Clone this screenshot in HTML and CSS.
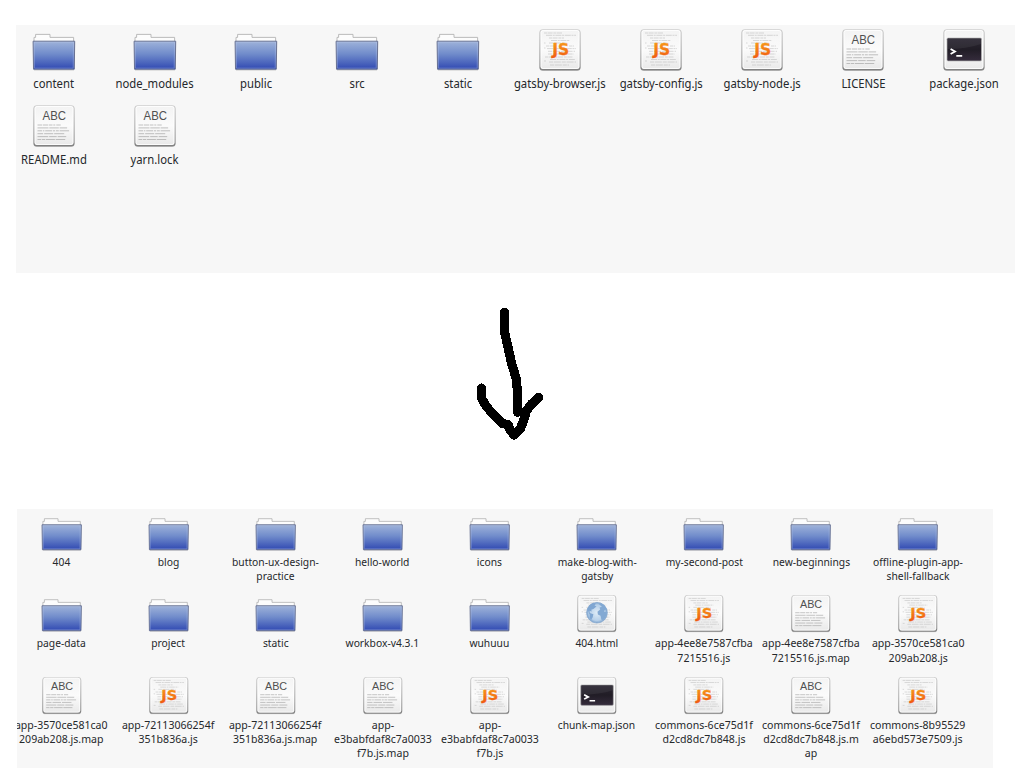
FILE: index.html
```html
<!DOCTYPE html>
<html lang="en">
<head>
<meta charset="utf-8">
<title>Gatsby build</title>
<link rel="stylesheet" href="styles.css">
</head>
<body>
<svg class="defs" width="0" height="0" aria-hidden="true">
  <defs>
    <linearGradient id="blue" x1="0" y1="0" x2="0" y2="1"><stop offset="0" stop-color="#9fb3da"/><stop offset=".45" stop-color="#718ccb"/><stop offset="1" stop-color="#3049b2"/></linearGradient>
    <linearGradient id="paper" x1="0" y1="0" x2="0" y2="1"><stop offset="0" stop-color="#f3f3f3"/><stop offset=".5" stop-color="#fbfbfb"/><stop offset="1" stop-color="#e9e9e9"/></linearGradient>
    <linearGradient id="edge" x1="0" y1="0" x2="0" y2="1"><stop offset="0" stop-color="#cfcfcf"/><stop offset="1" stop-color="#808080"/></linearGradient>
    <linearGradient id="orange" x1="0" y1="0" x2="0" y2="1"><stop offset="0" stop-color="#f7a01c"/><stop offset="1" stop-color="#f05a10"/></linearGradient>
    <linearGradient id="screen" x1="0" y1="0" x2="0" y2="1"><stop offset="0" stop-color="#2c2833"/><stop offset=".5" stop-color="#211d26"/><stop offset="1" stop-color="#352c3c"/></linearGradient>
    <radialGradient id="sea"><stop offset="0" stop-color="#dfecf7"/><stop offset=".75" stop-color="#b7d0e9"/><stop offset="1" stop-color="#7da3cd"/></radialGradient>
  </defs>
  <symbol id="folder" viewBox="0 0 44 44" preserveAspectRatio="none">
    <path d="M2 41.9H42" stroke="#000" stroke-opacity=".18" stroke-width="1.2"/>
    <path d="M2 14V9.4H3.6V6.4H18V9.4H41.6V14Z" fill="#fcfcfc" stroke="#b4b4b4" stroke-width=".9"/>
    <path d="M1.1 13.2H42.7L42.3 41.2H1.5Z" fill="url(#blue)" stroke="#687192" stroke-width="1"/>
    <path d="M2.2 14.2H41.5L41.2 40.1H2.5Z" fill="none" stroke="#c3d0ee" stroke-opacity=".38" stroke-width=".8"/>
  </symbol>
  <symbol id="sheet" viewBox="0 0 44 44" preserveAspectRatio="none">
    <rect x="1.3" y="2" width="41.4" height="41" rx="3.5" fill="#000" opacity=".12"/>
    <rect x="1.5" y="1.2" width="41" height="41.3" rx="3.3" fill="url(#edge)"/>
    <rect x="2.5" y="1.9" width="39" height="39.2" rx="2.5" fill="url(#paper)"/>
    <rect x="3.1" y="2.5" width="37.8" height="38" rx="2" fill="none" stroke="#fff" stroke-width=".8"/>
  </symbol>
  <symbol id="text" viewBox="0 0 44 44" preserveAspectRatio="none">
    <use href="#sheet" width="44" height="44"/>
    <text x="10.6" y="15.9" class="abc" textLength="23.4" lengthAdjust="spacingAndGlyphs">ABC</text>
    <g stroke="#a2a2a2" stroke-width="1" fill="none" opacity=".65">
      <path d="M5.5 21H37" stroke-dasharray="4.6 .7 5.2 .7 3.8 .8 2 1 4.4 20"/>
      <path d="M5.5 23.9H36" stroke-dasharray="11 .8 9.5 .8 7.5 20"/>
      <path d="M5.5 26.8H39" stroke-dasharray="4.5 .8 1.6 .8 7 .8 2 .8 3 .8 9.5 20"/>
      <path d="M5.5 29.7H36" stroke-dasharray="5.6 1.1 9 1 10 20"/>
      <path d="M5.5 32.6H37.5" stroke-dasharray="10.7 1 7.5 1 8.5 20"/>
      <path d="M5.5 35.5H34" stroke-dasharray="3.5 .7 3.5 .7 9 .8 9.5 20"/>
    </g>
  </symbol>
  <symbol id="code" viewBox="0 0 44 44" preserveAspectRatio="none">
    <use href="#sheet" width="44" height="44"/>
    <g stroke="#b4b4b4" stroke-width=".8" fill="none" opacity=".6">
      <path d="M6 5H24M11 10H26M8 18H18M31 18H36M7 29H35" stroke-dasharray="3 .6 5 .8"/>
      <path d="M8 7.3H38M13 12.5H32M9 20.6H38M12 31.5H37" stroke-dasharray="6 .7 2 .7"/>
      <path d="M11 15H29M10 23.3H37M10 26H36M11 34H38M12 37H31" stroke-dasharray="4 .8 7 1"/>
      <path d="M6 15H7.5M6 20H7.5M6 33H8"/>
    </g>
  </symbol>
  <symbol id="js" viewBox="0 0 44 44" preserveAspectRatio="none">
    <use href="#code" width="44" height="44"/>
    <text x="22.6" y="26.6" text-anchor="middle" class="js">JS</text>
  </symbol>
  <symbol id="terminal" viewBox="0 0 44 44" preserveAspectRatio="none">
    <use href="#sheet" width="44" height="44"/>
    <rect x="5" y="10" width="34.5" height="23" rx="1.2" fill="url(#screen)" stroke="#b5b5b5" stroke-width=".7"/>
    <path d="M5.5 21Q25 21 39 16V11H5.5Z" fill="#fff" opacity=".06"/>
    <path d="M8.6 21L13 23.5L8.6 26M14.3 27.8H20.2" fill="none" stroke="#fff" stroke-width="1.8"/>
  </symbol>
  <symbol id="html" viewBox="0 0 44 44" preserveAspectRatio="none">
    <use href="#code" width="44" height="44"/>
    <g transform="translate(2.2 .6) scale(.9 .95)">
      <circle cx="22.2" cy="21.5" r="12.2" fill="url(#sea)" stroke="#7fa5ce" stroke-width=".8"/>
      <path d="M11 17Q13 11.4 18 10L21 10.6L19.4 13L21.6 14.2L18 17.2L15.4 18L16.2 20L13.4 19.3L13.8 21.7L18 23.2L17.2 26.7L15.2 30.2Q13.2 28 13.5 23.6Z" fill="#7fa6d2"/>
      <path d="M24.4 11.2L27 10.2Q32.5 12.3 33.8 18.5L31.8 17.7L30.3 20L33.8 21Q33.6 26.4 29.6 30.1L27.4 29.7L26.4 25L23.3 23.6L22.8 20.2L26 17.6L25.2 15.3L28 14.3Z" fill="#83a9d3"/>
    </g>
  </symbol>
</svg>

<main class="page">
  <section class="panel source">
    <figure class="item"><svg><use href="#folder"/></svg><figcaption>content</figcaption></figure>
    <figure class="item"><svg><use href="#folder"/></svg><figcaption>node_modules</figcaption></figure>
    <figure class="item"><svg><use href="#folder"/></svg><figcaption>public</figcaption></figure>
    <figure class="item"><svg><use href="#folder"/></svg><figcaption>src</figcaption></figure>
    <figure class="item"><svg><use href="#folder"/></svg><figcaption>static</figcaption></figure>
    <figure class="item"><svg><use href="#js"/></svg><figcaption>gatsby-browser.js</figcaption></figure>
    <figure class="item"><svg><use href="#js"/></svg><figcaption>gatsby-config.js</figcaption></figure>
    <figure class="item"><svg><use href="#js"/></svg><figcaption>gatsby-node.js</figcaption></figure>
    <figure class="item"><svg><use href="#text"/></svg><figcaption>LICENSE</figcaption></figure>
    <figure class="item"><svg><use href="#terminal"/></svg><figcaption>package.json</figcaption></figure>
    <figure class="item"><svg><use href="#text"/></svg><figcaption>README.md</figcaption></figure>
    <figure class="item"><svg><use href="#text"/></svg><figcaption>yarn.lock</figcaption></figure>
  </section>

  <div class="arrow">
    <svg width="80" height="140" viewBox="470 305 80 140" fill="none" stroke="#000" stroke-width="9.2" stroke-linecap="round" stroke-linejoin="round" shape-rendering="crispEdges">
      <path d="M504.5 312.5V332L508 347L511.5 363L516 378L517.5 391V412.3"/>
      <path d="M481.5 388V397.5Q483 402 489 409.5L502.5 423.5L508 424.5L510 430L514 435L520 429.5L523.5 421L526.5 410.5L532 403.5L538.5 397.5"/>
    </svg>
  </div>

  <section class="panel build">
    <figure class="item"><svg><use href="#folder"/></svg><figcaption>404</figcaption></figure>
    <figure class="item"><svg><use href="#folder"/></svg><figcaption>blog</figcaption></figure>
    <figure class="item"><svg><use href="#folder"/></svg><figcaption>button-ux-design-<br>practice</figcaption></figure>
    <figure class="item"><svg><use href="#folder"/></svg><figcaption>hello-world</figcaption></figure>
    <figure class="item"><svg><use href="#folder"/></svg><figcaption>icons</figcaption></figure>
    <figure class="item"><svg><use href="#folder"/></svg><figcaption>make-blog-with-<br>gatsby</figcaption></figure>
    <figure class="item"><svg><use href="#folder"/></svg><figcaption>my-second-post</figcaption></figure>
    <figure class="item"><svg><use href="#folder"/></svg><figcaption>new-beginnings</figcaption></figure>
    <figure class="item"><svg><use href="#folder"/></svg><figcaption>offline-plugin-app-<br>shell-fallback</figcaption></figure>
    <figure class="item"><svg><use href="#folder"/></svg><figcaption>page-data</figcaption></figure>
    <figure class="item"><svg><use href="#folder"/></svg><figcaption>project</figcaption></figure>
    <figure class="item"><svg><use href="#folder"/></svg><figcaption>static</figcaption></figure>
    <figure class="item"><svg><use href="#folder"/></svg><figcaption>workbox-v4.3.1</figcaption></figure>
    <figure class="item"><svg><use href="#folder"/></svg><figcaption>wuhuuu</figcaption></figure>
    <figure class="item"><svg><use href="#html"/></svg><figcaption>404.html</figcaption></figure>
    <figure class="item hashed"><svg><use href="#js"/></svg><figcaption>app-4ee8e7587cfba<br>7215516.js</figcaption></figure>
    <figure class="item hashed"><svg><use href="#text"/></svg><figcaption>app-4ee8e7587cfba<br>7215516.js.map</figcaption></figure>
    <figure class="item hashed"><svg><use href="#js"/></svg><figcaption>app-3570ce581ca0<br>209ab208.js</figcaption></figure>
    <figure class="item hashed"><svg><use href="#text"/></svg><figcaption>app-3570ce581ca0<br>209ab208.js.map</figcaption></figure>
    <figure class="item hashed"><svg><use href="#js"/></svg><figcaption>app-72113066254f<br>351b836a.js</figcaption></figure>
    <figure class="item hashed"><svg><use href="#text"/></svg><figcaption>app-72113066254f<br>351b836a.js.map</figcaption></figure>
    <figure class="item hashed"><svg><use href="#text"/></svg><figcaption>app-<br>e3babfdaf8c7a0033<br>f7b.js.map</figcaption></figure>
    <figure class="item hashed"><svg><use href="#js"/></svg><figcaption>app-<br>e3babfdaf8c7a0033<br>f7b.js</figcaption></figure>
    <figure class="item"><svg><use href="#terminal"/></svg><figcaption>chunk-map.json</figcaption></figure>
    <figure class="item hashed"><svg><use href="#js"/></svg><figcaption>commons-6ce75d1f<br>d2cd8dc7b848.js</figcaption></figure>
    <figure class="item hashed"><svg><use href="#text"/></svg><figcaption>commons-6ce75d1f<br>d2cd8dc7b848.js.m<br>ap</figcaption></figure>
    <figure class="item hashed"><svg><use href="#js"/></svg><figcaption>commons-8b95529<br>a6ebd573e7509.js</figcaption></figure>
  </section>
</main>
</body>
</html>
```
FILE: styles.css
```css
* { box-sizing: border-box; }
body { margin: 0; background: #fff; color: #25282b; font-family: "Noto Sans", sans-serif; overflow: hidden; }
.defs { position: absolute; }
.page { height: 768px; padding-top: 25px; display: flex; flex-direction: column; overflow: hidden; }
.panel { display: grid; flex: none; background: #f7f7f7; overflow: hidden; align-content: start; }
.item { margin: 0; display: flex; flex-direction: column; align-items: center; min-width: 0; }
.item svg { display: block; flex: none; }
.item figcaption { text-align: center; white-space: nowrap; }

.source { width: 999px; height: 247.5px; margin-left: 16px; padding-top: 3px; grid-template-columns: repeat(10, 101.2px); grid-auto-rows: 76px; }
.source .item { margin-left: -25.8px; }
.source svg { width: 44px; height: 44px; }
.source figcaption { font-size: 12px; line-height: 16px; margin-top: 4px; transform: scaleX(.94); }

.arrow { flex: none; height: 236.5px; padding: 32.5px 0 0 470px; }
.arrow svg { display: block; }

.build { width: 976px; height: 259px; margin-left: 17px; padding-top: 3.6px; grid-template-columns: repeat(9, 107.1px); grid-auto-rows: 81.6px; }
.build .item { margin-left: -18.4px; }
.build svg { width: 41.6px; height: 39.2px; }
.build figcaption { font-size: 11px; line-height: 14.2px; margin-top: 3px; transform: scaleX(.935); }
.build .hashed figcaption { transform: scaleX(.96); }

.abc { font: 13px "Liberation Sans", sans-serif; fill: #505050; }
.js { font: bold 15.5px "DejaVu Sans", sans-serif; fill: url(#orange); stroke: url(#orange); stroke-width: .3px; }
```
